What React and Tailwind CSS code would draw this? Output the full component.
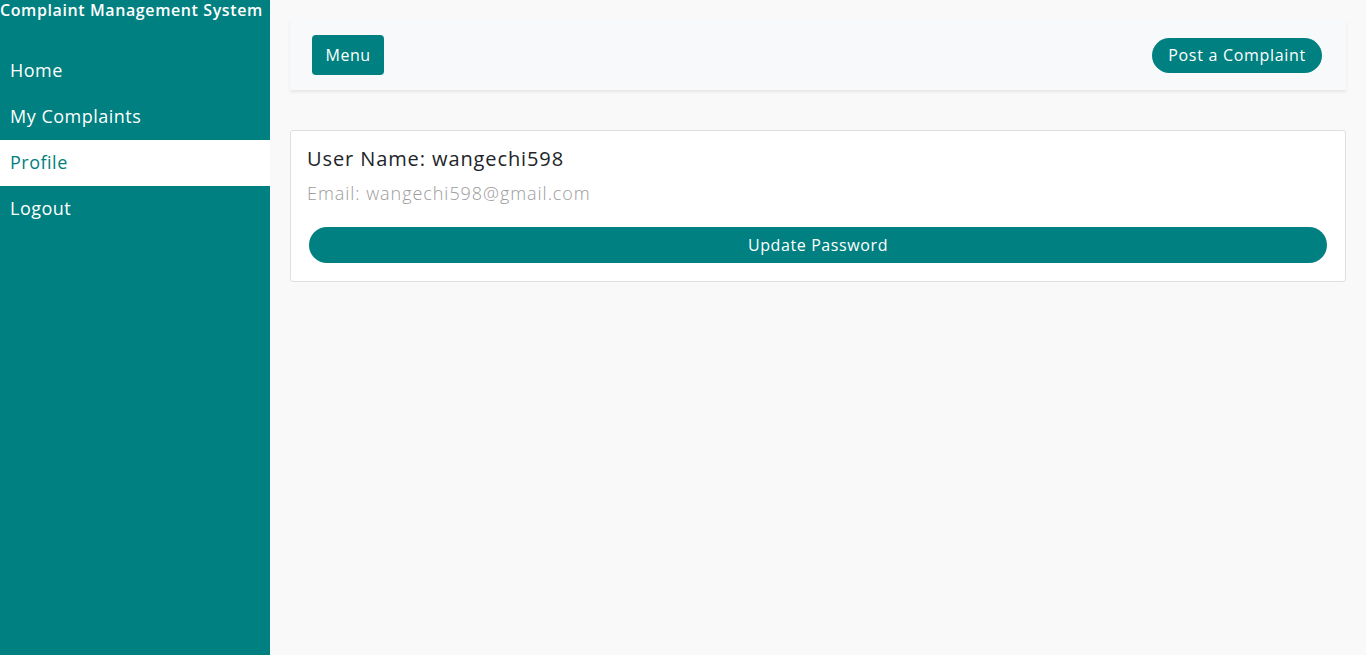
import React from 'react';

const navItems = ['Home', 'My Complaints', 'Profile', 'Logout'];

export default function App() {
  const active = 'Profile';

  return (
    <div className="flex h-[655px] w-full bg-[#f9f9f9] font-['Open_Sans',sans-serif]">
      {/* Sidebar */}
      <aside className="w-[270px] shrink-0 bg-[#008080] text-white">
        <h1 className="h-[24px] text-[16px] font-semibold leading-[21px] tracking-[0.6px] whitespace-nowrap">
          Complaint Management System
        </h1>
        <nav className="mt-[24px] flex flex-col">
          {navItems.map(item => (
            <a
              key={item}
              href="#"
              className={
                item === active
                  ? 'h-[46px] pl-[10px] pb-[1px] flex items-center text-[18px] tracking-[0.5px] bg-white text-[#008080]'
                  : 'h-[46px] pl-[10px] pb-[1px] flex items-center text-[18px] tracking-[0.5px] text-white'
              }
            >
              {item}
            </a>
          ))}
        </nav>
      </aside>

      {/* Main */}
      <main className="flex-1 pl-[20px] pr-[20px] pt-[20px]">
        <div className="h-[70px] flex items-center justify-between bg-[#f8f9fa] shadow-[0_2px_3px_rgba(0,0,0,0.08)] pl-[22px] pr-[24px]">
          <button className="h-[40px] w-[72px] rounded-[4px] bg-[#008080] text-white text-[16px] tracking-[0.5px]">
            Menu
          </button>
          <button className="h-[35px] px-[16px] pb-[1px] rounded-full bg-[#008080] text-white text-[16px] tracking-[0.7px] mt-[1px]">
            Post a Complaint
          </button>
        </div>

        <div className="mt-[40px] bg-white border border-[#dfdfdf] rounded-[3px] px-[16px] pt-[14px] pb-[18px]">
          <h2 className="text-[20px] leading-[28px] text-[#212529] font-medium tracking-[0.9px]">User Name: wangechi598</h2>
          <p className="mt-[8px] text-[18px] leading-[24px] text-[#9c9c9c] font-light tracking-[0.95px]">Email: wangechi598@gmail.com</p>
          <button className="mt-[22px] ml-[2px] w-[calc(100%-4px)] h-[36px] rounded-full bg-[#008080] text-white text-[16px] tracking-[0.6px]">
            Update Password
          </button>
        </div>
      </main>
    </div>
  );
}
